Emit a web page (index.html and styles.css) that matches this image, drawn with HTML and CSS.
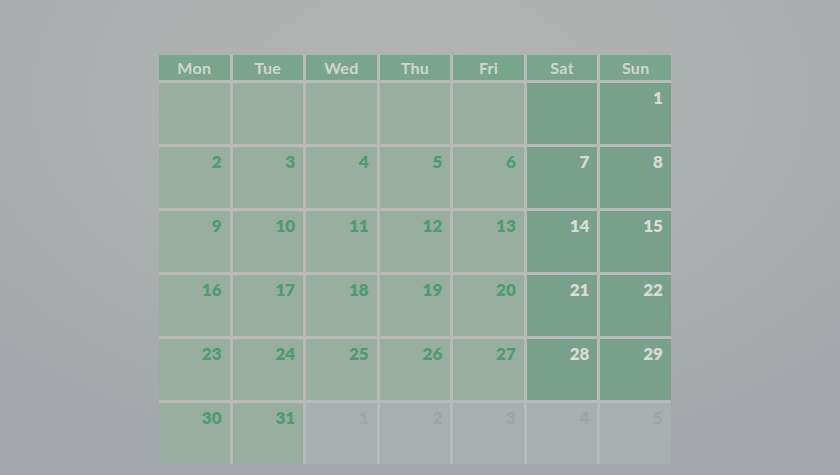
FILE: index.html
```html
<!DOCTYPE html>
<html lang="en">

<head>
  <meta charset="UTF-8">
  <meta name="viewport" content="width=device-width, initial-scale=1.0">
  <title>Calendar</title>
  <link rel="stylesheet" href="styles.css">
</head>

<body>
  <div class="page">
    <div class="calendar">
      <div class="head">Mon</div>
      <div class="head">Tue</div>
      <div class="head">Wed</div>
      <div class="head">Thu</div>
      <div class="head">Fri</div>
      <div class="head">Sat</div>
      <div class="head">Sun</div>

      <div class="day"></div>
      <div class="day"></div>
      <div class="day"></div>
      <div class="day"></div>
      <div class="day"></div>
      <div class="day weekend"></div>
      <div class="day weekend">1</div>

      <div class="day">2</div>
      <div class="day">3</div>
      <div class="day">4</div>
      <div class="day">5</div>
      <div class="day">6</div>
      <div class="day weekend">7</div>
      <div class="day weekend">8</div>

      <div class="day">9</div>
      <div class="day">10</div>
      <div class="day">11</div>
      <div class="day">12</div>
      <div class="day">13</div>
      <div class="day weekend">14</div>
      <div class="day weekend">15</div>

      <div class="day">16</div>
      <div class="day">17</div>
      <div class="day">18</div>
      <div class="day">19</div>
      <div class="day">20</div>
      <div class="day weekend">21</div>
      <div class="day weekend">22</div>

      <div class="day">23</div>
      <div class="day">24</div>
      <div class="day">25</div>
      <div class="day">26</div>
      <div class="day">27</div>
      <div class="day weekend">28</div>
      <div class="day weekend">29</div>

      <div class="day">30</div>
      <div class="day">31</div>
      <div class="day other">1</div>
      <div class="day other">2</div>
      <div class="day other">3</div>
      <div class="day other">4</div>
      <div class="day other">5</div>
    </div>
  </div>
</body>

</html>
```

FILE: styles.css
```css
* {
  margin: 0;
  padding: 0;
  box-sizing: border-box;
}

html,
body {
  height: 100%;
}

body {
  background: radial-gradient(ellipse 70% 80% at 50% 20%, #b3b5b4 0%, #acafaf 55%, #a4a8ac 100%);
  font-family: Lato, "Open Sans", sans-serif;
  overflow: hidden;
}

.page {
  display: flex;
  padding: 55px 0 0 159px;
}

.calendar {
  width: 512px;
  display: grid;
  grid-template-columns: repeat(7, 1fr);
  grid-template-rows: 25px repeat(6, 61px);
  gap: 3px;
  background: #b9bbba;
}

.head {
  background: #79a48d;
  color: #d2d6d2;
  font-weight: 700;
  font-size: 16px;
  display: flex;
  align-items: center;
  justify-content: center;
  letter-spacing: 0.3px;
}

.day {
  background: #97aea0;
  color: #4e9a71;
  font-weight: 800;
  font-size: 17px;
  text-align: right;
  padding: 6px 8px 0 0;
  line-height: 18px;
}

.day.weekend {
  background: #78a08b;
  color: #d8dcd8;
}

.day.other {
  background: #a8afb1;
  color: #9ea5a7;
}
```
